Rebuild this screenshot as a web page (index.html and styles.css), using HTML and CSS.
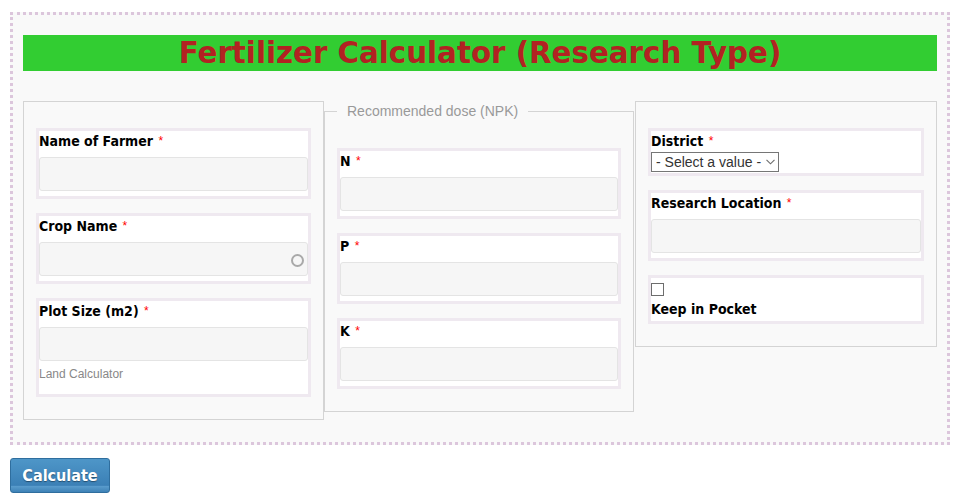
FILE: index.html
```html
<!DOCTYPE html>
<html lang="en">
<head>
<meta charset="utf-8">
<title>Fertilizer Calculator (Research Type)</title>
<link rel="stylesheet" href="styles.css">
</head>
<body>
<form class="calc">
  <div class="panel">
    <h1 class="title">Fertilizer Calculator (Research Type)</h1>
    <div class="columns">
      <fieldset class="group group-left">
        <div class="item">
          <label class="label" for="farmer">Name of Farmer <span class="req">*</span></label>
          <input class="field" id="farmer" type="text">
        </div>
        <div class="item">
          <label class="label" for="crop">Crop Name <span class="req">*</span></label>
          <div class="auto">
            <input class="field" id="crop" type="text">
            <span class="throbber"></span>
          </div>
        </div>
        <div class="item">
          <label class="label" for="plot">Plot Size (m2) <span class="req">*</span></label>
          <input class="field" id="plot" type="text">
          <div class="desc">Land Calculator</div>
        </div>
      </fieldset>
      <fieldset class="group group-mid">
        <legend class="legend">Recommended dose (NPK)</legend>
        <div class="item">
          <label class="label" for="n">N <span class="req">*</span></label>
          <input class="field" id="n" type="text">
        </div>
        <div class="item">
          <label class="label" for="p">P <span class="req">*</span></label>
          <input class="field" id="p" type="text">
        </div>
        <div class="item">
          <label class="label" for="k">K <span class="req">*</span></label>
          <input class="field" id="k" type="text">
        </div>
      </fieldset>
      <fieldset class="group group-right">
        <div class="item">
          <label class="label" for="district">District <span class="req">*</span></label>
          <span class="select-wrap">
            <select class="select" id="district">
              <option>- Select a value -</option>
            </select>
            <svg class="chev" width="9" height="6" viewBox="0 0 9 6" aria-hidden="true"><path d="M0.5 0.8 L4.5 4.8 L8.5 0.8" fill="none" stroke="#6b6b6b" stroke-width="1.1"/></svg>
          </span>
        </div>
        <div class="item">
          <label class="label" for="loc">Research Location <span class="req">*</span></label>
          <input class="field" id="loc" type="text">
        </div>
        <div class="item">
          <input class="check" id="pocket" type="checkbox">
          <label class="label" for="pocket">Keep in Pocket</label>
        </div>
      </fieldset>
    </div>
  </div>
  <button class="btn" type="button">Calculate</button>
</form>
</body>
</html>
```
FILE: styles.css
```css
html, body {
  margin: 0;
  padding: 0;
  background: #ffffff;
}

body {
  padding: 12px 16px 0 10px;
  font-family: "Liberation Sans", Arial, sans-serif;
}

.panel {
  border: 3px dotted #dcc6dc;
  background: #f9f9f9;
  padding: 20px 10px 22px;
}

.title {
  margin: 0;
  background: #32cd32;
  color: #b22222;
  font-family: "DejaVu Sans", sans-serif;
  font-weight: bold;
  font-size: 29.3px;
  line-height: 36px;
  text-align: center;
}

.columns {
  display: flex;
  align-items: flex-start;
  margin-top: 30px;
}

.group {
  box-sizing: border-box;
  margin: 0;
  border: 1px solid #d4d4d4;
  padding: 26px 12px 22px;
  background: #f9f9f9;
  min-width: 0;
}

.group-left {
  width: 301px;
}

.group-mid {
  flex: 1;
  margin-right: 1px;
}

.group-right {
  width: 302px;
}

.legend {
  padding: 0 10px;
  color: #999;
  font-size: 14px;
  line-height: 21px;
}

.item {
  border: 3px solid #efe9f0;
  background: #fff;
  padding: 0 0 1px;
  margin-bottom: 14px;
}

.item:last-child {
  margin-bottom: 0;
}

.label {
  display: block;
  font-family: "DejaVu Sans", sans-serif;
  font-stretch: condensed;
  font-weight: bold;
  font-size: 14px;
  line-height: 21px;
  height: 21px;
  color: #000;
}

.req {
  color: #f00;
  font-family: "Liberation Sans", Arial, sans-serif;
  font-weight: normal;
  font-size: 12px;
  line-height: 0;
  margin-left: 1px;
  vertical-align: 1px;
}

.field {
  display: block;
  box-sizing: border-box;
  width: 100%;
  height: 34px;
  margin: 5px 0 4px;
  border: 1px solid #e4e4e4;
  border-radius: 3px;
  background: #f6f6f6;
  font-size: 13px;
}

.auto {
  position: relative;
}

.throbber {
  position: absolute;
  right: 4px;
  top: 12px;
  width: 9px;
  height: 9px;
  border: 2px solid #a9a9a9;
  border-radius: 50%;
}

.desc {
  color: #888;
  font-size: 12px;
  line-height: 18px;
  margin-bottom: 10px;
}

.select-wrap {
  position: relative;
  display: block;
  width: 128px;
  height: 20px;
}

.select {
  display: block;
  box-sizing: border-box;
  appearance: none;
  -webkit-appearance: none;
  width: 128px;
  height: 20px;
  margin: 0;
  padding: 0 0 0 4px;
  font-family: "Liberation Sans", Arial, sans-serif;
  font-size: 14px;
  line-height: 18px;
  border: 1px solid #767676;
  border-radius: 0;
  background: #fff;
  color: #333;
}

.chev {
  position: absolute;
  right: 4px;
  top: 7px;
  pointer-events: none;
}

.check {
  display: block;
  box-sizing: border-box;
  appearance: none;
  -webkit-appearance: none;
  width: 13px;
  height: 13px;
  margin: 5px 0 3px;
  border: 1px solid #6d6d6d;
  border-radius: 0;
  background: #fff;
}

.btn {
  display: block;
  margin-top: 13px;
  width: 100px;
  height: 35px;
  border: 1px solid #2f6e9e;
  border-radius: 3px;
  background: linear-gradient(#4e96c8, #3b80b6 80%, #5a9ccd 82%, #3e82b6);
  color: #fff;
  font-family: "DejaVu Sans", sans-serif;
  font-stretch: condensed;
  font-weight: bold;
  font-size: 16px;
  text-shadow: 0 1px 1px rgba(0, 0, 0, 0.4);
  padding: 0;
}
```
